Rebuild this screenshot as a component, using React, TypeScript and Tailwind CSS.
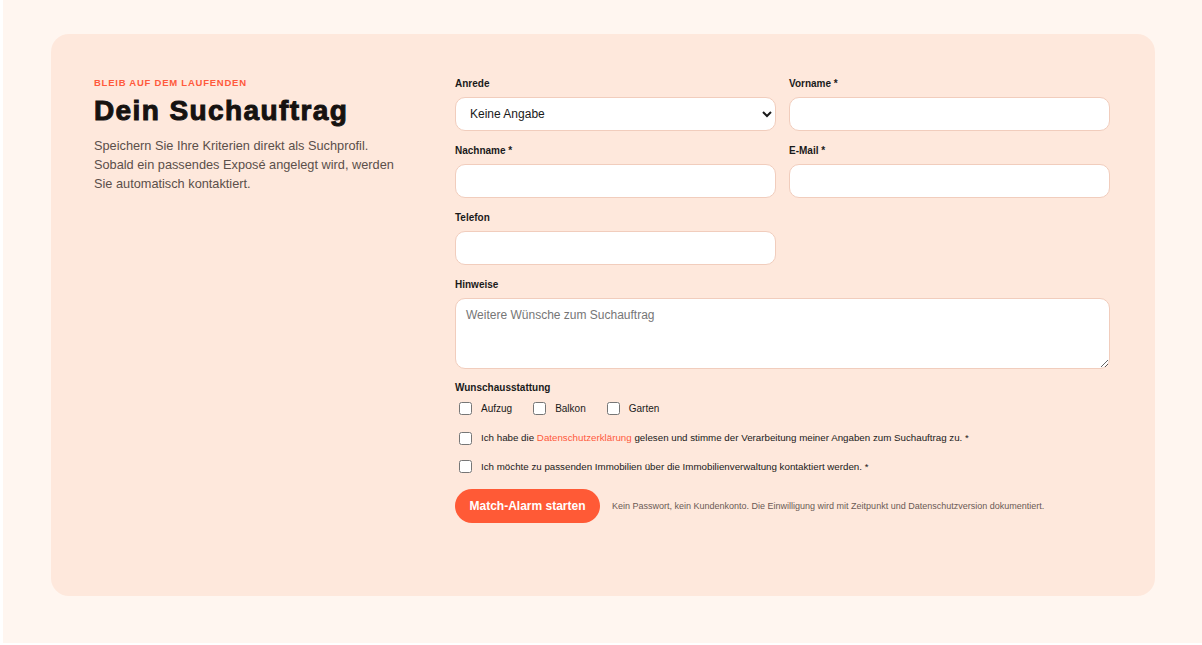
import { useState } from 'react'

const inputClass =
  'block h-[34px] w-full rounded-[10px] border border-[#f1cdbd] bg-white px-3 text-[12px] text-[#1a1a1a] outline-none focus:border-[#ff5a36]'

const labelClass = 'mb-[7px] block text-[10px] font-bold leading-[12px] text-[#1a1a1a]'

function Field({ label, children }: { label: string; children: React.ReactNode }) {
  return (
    <div>
      <label className={labelClass}>{label}</label>
      {children}
    </div>
  )
}

export default function App() {
  const [features, setFeatures] = useState<string[]>([])

  function toggleFeature(name: string) {
    setFeatures((list) => (list.includes(name) ? list.filter((item) => item !== name) : [...list, name]))
  }

  return (
    <div className="min-h-[645px] bg-white pl-[3px] pb-[2px] font-[family-name:'Liberation_Sans',Arial,sans-serif]">
      <div className="min-h-[643px] bg-[#fff6f0] pt-[34px] pr-[47px] pb-[47px] pl-[48px]">
        <section className="grid grid-cols-[305px_1fr] gap-[56px] rounded-[18px] bg-[#fee8dc] pt-[44px] pr-[45px] pb-[73px] pl-[43px]">
          <div>
            <p className="text-[9.5px] font-bold leading-[9px] tracking-[0.08em] text-[#ff5a3c] uppercase">
              Bleib auf dem Laufenden
            </p>
            <h1 className="mt-[7px] text-[28px] leading-[34px] font-black tracking-[0.05em] text-[#161210] [-webkit-text-stroke:1px_#161210]">
              Dein Suchauftrag
            </h1>
            <p className="mt-[8px] text-[12.75px] leading-[19px] text-[#5b4f4a]">
              Speichern Sie Ihre Kriterien direkt als Suchprofil. Sobald ein passendes Exposé angelegt wird, werden Sie
              automatisch kontaktiert.
            </p>
          </div>

          <form onSubmit={(event) => event.preventDefault()}>
            <div className="grid grid-cols-2 gap-x-[13px] gap-y-[14px]">
              <Field label="Anrede">
                <select className={`${inputClass} pl-[10px]`} defaultValue="none">
                  <option value="none">Keine Angabe</option>
                  <option value="frau">Frau</option>
                  <option value="herr">Herr</option>
                  <option value="divers">Divers</option>
                </select>
              </Field>
              <Field label="Vorname *">
                <input type="text" className={inputClass} />
              </Field>
              <Field label="Nachname *">
                <input type="text" className={inputClass} />
              </Field>
              <Field label="E-Mail *">
                <input type="email" className={inputClass} />
              </Field>
              <Field label="Telefon">
                <input type="tel" className={inputClass} />
              </Field>
              <div></div>
              <div className="col-span-2">
                <label className={labelClass}>Hinweise</label>
                <textarea
                  placeholder="Weitere Wünsche zum Suchauftrag"
                  className="block h-[71px] w-full rounded-[10px] border border-[#f1cdbd] bg-white px-[10px] py-[7px] text-[12px] text-[#1a1a1a] outline-none placeholder:text-[#767676]"
                />
              </div>
            </div>

            <p className="mt-[13px] text-[10px] font-bold leading-[12px] text-[#1a1a1a]">Wunschausstattung</p>
            <div className="mt-[7px] flex items-center gap-[17px]">
              {['Aufzug', 'Balkon', 'Garten'].map((name) => (
                <label key={name} className="flex items-center gap-[9px] text-[10px] text-[#1a1a1a]">
                  <input
                    type="checkbox"
                    checked={features.includes(name)}
                    onChange={() => toggleFeature(name)}
                    className="ml-[4px] h-[13px] w-[13px]"
                  />
                  {name}
                </label>
              ))}
            </div>

            <label className="mt-[15px] flex items-center gap-[9px] text-[9.75px] text-[#1a1a1a]">
              <input type="checkbox" className="ml-[4px] h-[13px] w-[13px]" />
              <span>
                Ich habe die <span className="text-[#ff5a3c]">Datenschutzerklärung</span> gelesen und stimme der
                Verarbeitung meiner Angaben zum Suchauftrag zu. *
              </span>
            </label>

            <label className="mt-[14px] flex items-center gap-[9px] text-[9.75px] text-[#1a1a1a]">
              <input type="checkbox" className="ml-[4px] h-[13px] w-[13px]" />
              <span>Ich möchte zu passenden Immobilien über die Immobilienverwaltung kontaktiert werden. *</span>
            </label>

            <div className="mt-[15px] flex items-center gap-[12px]">
              <button
                type="submit"
                className="h-[34px] w-[145px] rounded-full bg-[#ff5a36] text-[12px] font-bold text-white hover:bg-[#f04a26]"
              >
                Match-Alarm starten
              </button>
              <p className="text-[9px] text-[#6b5a55]">
                Kein Passwort, kein Kundenkonto. Die Einwilligung wird mit Zeitpunkt und Datenschutzversion dokumentiert.
              </p>
            </div>
          </form>
        </section>
      </div>
    </div>
  )
}
